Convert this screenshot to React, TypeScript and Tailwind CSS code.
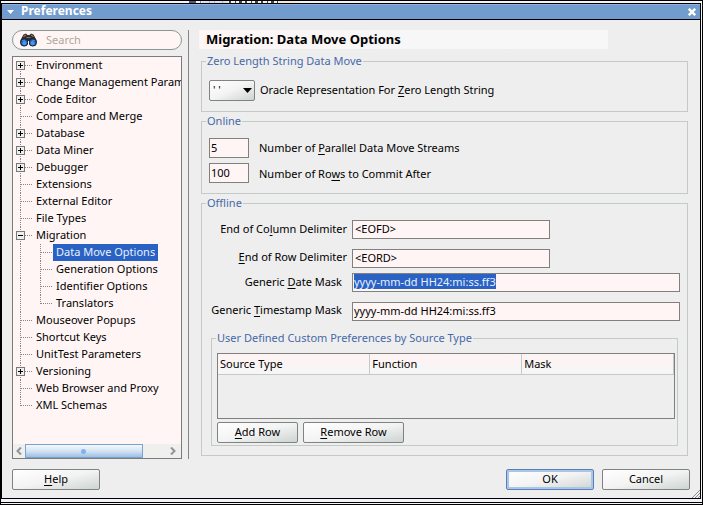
import { useEffect, useRef, useState } from "react";

type Node = { label: string; children?: string[]; expandable?: boolean };

const TREE: Node[] = [
  { label: "Environment", expandable: true },
  { label: "Change Management Param", expandable: true },
  { label: "Code Editor", expandable: true },
  { label: "Compare and Merge" },
  { label: "Database", expandable: true },
  { label: "Data Miner", expandable: true },
  { label: "Debugger", expandable: true },
  { label: "Extensions" },
  { label: "External Editor" },
  { label: "File Types" },
  {
    label: "Migration",
    expandable: true,
    children: ["Data Move Options", "Generation Options", "Identifier Options", "Translators"],
  },
  { label: "Mouseover Popups" },
  { label: "Shortcut Keys" },
  { label: "UnitTest Parameters" },
  { label: "Versioning", expandable: true },
  { label: "Web Browser and Proxy" },
  { label: "XML Schemas" },
];

/* One 20x17 cell of the tree's dotted guide lines */
function Guide({ first, last, branch = true, box }: any) {
  return (
    <svg width="20" height="17" viewBox="0 0 20 17" className="shrink-0" shapeRendering="crispEdges">
      <g stroke="#8a8686" strokeDasharray="1 1">
        <path d={`M7.5 ${first ? 8 : 0}V${last ? 9 : 17}`} />
        {branch && <path d="M8 8.5H20" />}
      </g>
      {box && (
        <>
          <rect x="3.5" y="4.5" width="8" height="8" fill="#f0eeec" stroke="#77787a" />
          <path d="M5 8.5H10" stroke="#000" />
          {box === "plus" && <path d="M7.5 6V11" stroke="#000" />}
        </>
      )}
    </svg>
  );
}

function Binoculars() {
  return (
    <svg width="17" height="14" viewBox="0 0 17 14" className="shrink-0">
      <path d="M3.5 1.5L6 0.5L7.5 2H9.5L11 0.5L13.5 1.5L16.5 7V10H0.5V7Z" fill="#332d2b" />
      <path d="M3.5 3.5L6 2M11 2L13.5 3.5" stroke="#a98f72" />
      <path d="M6.5 4.5H10.5" stroke="#6d7480" />
      <circle cx="4.2" cy="9.4" r="3.7" fill="#1f5cb0" stroke="#182339" />
      <circle cx="12.8" cy="9.4" r="3.7" fill="#1f5cb0" stroke="#182339" />
      <circle cx="4.4" cy="10.2" r="2.1" fill="#4298ec" />
      <circle cx="12.6" cy="10.2" r="2.1" fill="#4298ec" />
      <path d="M2 7.5H5M12 7.5H15" stroke="#5d7da8" />
      <path d="M8.5 8V14" stroke="#fff5f5" />
    </svg>
  );
}

function Sidebar() {
  const [selected, setSelected] = useState("Data Move Options");

  const item = (label: string) => (
    <button
      onClick={() => setSelected(label)}
      className={`h-[17px] px-[3px] pb-[2px] whitespace-nowrap ${
        selected === label ? "bg-[#2a62c4] text-[#e6f0ff]" : ""
      }`}
    >
      {label}
    </button>
  );

  return (
    <aside className="flex w-[170px] shrink-0 flex-col gap-[6px]">
      <label className="flex h-5 items-center gap-[9px] rounded-full border border-[#8b9694] bg-[#fff5f5] pl-[7px]">
        <Binoculars />
        <input
          type="search"
          aria-label="Search"
          placeholder="Search"
          className="w-full min-w-0 bg-transparent outline-none placeholder:text-[#b0a698]"
        />
      </label>

      <div className="flex flex-1 flex-col border border-[#7b7b7b] bg-[#fff5f5]">
        <ul className="flex-1 overflow-hidden">
          {TREE.map((node, i) => (
            <li key={node.label}>
              <div className="flex">
                <Guide
                  first={i === 0}
                  last={i === TREE.length - 1}
                  box={node.children ? "minus" : node.expandable && "plus"}
                />
                {item(node.label)}
              </div>
              {node.children && (
                <ul>
                  {node.children.map((child, j) => (
                    <li key={child} className="flex">
                      <Guide branch={false} />
                      <Guide last={j === node.children!.length - 1} />
                      {item(child)}
                    </li>
                  ))}
                </ul>
              )}
            </li>
          ))}
        </ul>

        {/* Horizontal scrollbar */}
        <div className="flex h-[14px] bg-[#efefee]">
          <button aria-label="Scroll left" className="flex w-3 items-center justify-center">
            <svg width="6" height="8" viewBox="0 0 6 8" fill="none" stroke="#8f9499" strokeWidth="2">
              <path d="M5 0.5L1.5 4L5 7.5" />
            </svg>
          </button>
          <div className="flex-1">
            <div className="flex h-full w-[84%] items-center justify-center border border-[#79a3cf] bg-linear-to-b from-[#f4f8fc] via-[#d5e4f3] to-[#9dbfe2]">
              <span className="size-[5px] rounded-full bg-[#7fb2ee]" />
            </div>
          </div>
          <button aria-label="Scroll right" className="flex w-4 items-center justify-center">
            <svg width="6" height="8" viewBox="0 0 6 8" fill="none" stroke="#8f9499" strokeWidth="2">
              <path d="M1 0.5L4.5 4L1 7.5" />
            </svg>
          </button>
        </div>
      </div>
    </aside>
  );
}

function Group({ title, className = "", children }: any) {
  return (
    <fieldset className={`min-w-0 border border-[#c3cac8] pl-1 ${className}`}>
      <legend className="h-[14px] px-px leading-[14px] text-[#4669a8]">{title}</legend>
      {children}
    </fieldset>
  );
}

function Button({ className = "", children, primary }: any) {
  return (
    <button
      className={`h-[21px] rounded-[2px] border bg-linear-to-br from-white via-[#f3f3f3] to-[#cdd4d2] pb-[2px] ${
        primary ? "border-[#5b7fb5] inset-ring-2 inset-ring-[#a9c5e8]" : "border-[#7f8382]"
      } ${className}`}
    >
      {children}
    </button>
  );
}

const field =
  "border border-[#808080] bg-[#fff5f5] pb-[2px] outline-none selection:bg-[#2a62c4] selection:text-[#e6f0ff]";

export default function App() {
  const dateMask = useRef<HTMLInputElement>(null);

  useEffect(() => {
    dateMask.current?.focus();
    dateMask.current?.select();
  }, []);

  return (
    <div className="flex min-h-screen flex-col border border-black bg-[#f3f3fa] font-['Noto_Sans',sans-serif] text-[11px] leading-[14px] text-black [&_u]:underline-offset-2">
      {/* Sliver of the window behind */}
      <div className="h-[2px] pl-[185px]">
        <svg width="120" height="2" viewBox="0 0 120 2" className="block" shapeRendering="crispEdges">
          <path d="M3 1H10" stroke="#55557a" strokeWidth="2" />
          <path d="M14 1H15M23 1H24M28 1H29M36 1H37" stroke="#8c8cb8" strokeWidth="2" />
          <path d="M16 1H42" stroke="#d3d3ee" strokeWidth="2" opacity="0.6" />
          <path d="M43 1H92" stroke="#444" strokeWidth="2" strokeDasharray="2 4 1 3 3 3" />
          <path d="M93 1H114" stroke="#f6e6dc" strokeWidth="2" />
        </svg>
      </div>

      <div className="relative mr-px flex flex-1 flex-col border border-black bg-[#eee]">
        <header className="flex h-4 items-center gap-[7px] border-b border-black bg-[#729bce] pr-1 pl-[5px] text-white inset-shadow-[0_1px_#8fb3de]">
          <svg width="7" height="4" viewBox="0 0 7 4">
            <path d="M0 0H7L3.5 4Z" fill="#fff" />
          </svg>
          <h1 className="flex-1 pb-px text-[12px] font-bold">Preferences</h1>
          <button aria-label="Close">
            <svg width="8" height="8" viewBox="0 0 8 8" stroke="#fff" strokeWidth="2.4">
              <path d="M0.8 0.8L7.2 7.2M7.2 0.8L0.8 7.2" />
            </svg>
          </button>
        </header>

        <div className="flex flex-1 flex-col gap-[10px] px-[10px] pt-[10px] pb-2">
          <div className="flex flex-1">
            <Sidebar />

            <main className="ml-[6px] min-w-0 flex-1 border-l border-[#858585] pr-[2px] pb-[3px] pl-[10px]">
              <h2 className="mr-20 h-[19px] bg-linear-to-r from-[#fff5f5] to-[#f7f7f7] to-50% pl-[7px] text-[13px] leading-[19px] font-bold">
                Migration: Data Move Options
              </h2>

              <div className="mt-[5px] ml-[2px] flex flex-col gap-[2px]">
                <Group title="Zero Length String Data Move" className="pt-3 pb-[10px]">
                  <div className="ml-[3px] flex items-center gap-[5px]">
                    <div className="relative">
                      <select
                        id="zero"
                        className="block h-[21px] w-[46px] appearance-none rounded-[2px] border border-[#7f8382] bg-linear-to-br from-white via-[#f3f3f3] to-[#cdd4d2] pb-[2px] pl-[3px]"
                      >
                        <option>' '</option>
                        <option>NULL</option>
                      </select>
                      <svg width="9" height="5" viewBox="0 0 9 5" className="pointer-events-none absolute top-2 right-[3px]">
                        <path d="M0 0H9L4.5 5Z" />
                      </svg>
                    </div>
                    <label htmlFor="zero" className="pb-[2px]">
                      Oracle Representation For <u>Z</u>ero Length String
                    </label>
                  </div>
                </Group>

                <Group title="Online" className="py-[10px]">
                  <div className="ml-[3px] grid grid-cols-[40px_1fr] items-center gap-x-[10px] gap-y-[5px]">
                    <input id="streams" defaultValue="5" className={`h-5 px-px ${field}`} />
                    <label htmlFor="streams">
                      Number of <u>P</u>arallel Data Move Streams
                    </label>
                    <input id="rows" defaultValue="100" className={`h-5 px-px ${field}`} />
                    <label htmlFor="rows" className="pt-[2px]">
                      Number of Ro<u>w</u>s to Commit After
                    </label>
                  </div>
                </Group>

                <Group title="Offline" className="pt-[10px] pr-[7px] pb-[9px]">
                  <div className="ml-[3px] grid grid-cols-[138px_1fr] items-center gap-x-[5px] gap-y-[10px] text-right">
                    <label htmlFor="col" className="pb-[2px]">
                      End of Co<u>l</u>umn Delimiter
                    </label>
                    <input id="col" defaultValue="<EOFD>" className={`h-[19px] w-[198px] px-[2px] ${field}`} />
                    <label htmlFor="row" className="pb-[4px]">
                      <u>E</u>nd of Row Delimiter
                    </label>
                    <input id="row" defaultValue="<EORD>" className={`h-[19px] w-[198px] px-[2px] ${field}`} />
                  </div>
                  <div className="mt-[5px] ml-[3px] grid grid-cols-[138px_1fr] items-center gap-x-[5px] gap-y-[10px] text-right whitespace-nowrap">
                    <label htmlFor="date" className="pr-[5px] pb-[2px]">
                      Generic <u>D</u>ate Mask
                    </label>
                    <input
                      id="date"
                      ref={dateMask}
                      defaultValue="yyyy-mm-dd HH24:mi:ss.ff3"
                      className={`h-[19px] px-px ${field}`}
                    />
                    <label htmlFor="stamp" className="pr-[5px] pb-[4px]">
                      Generic <u>T</u>imestamp Mask
                    </label>
                    <input id="stamp" defaultValue="yyyy-mm-dd HH24:mi:ss.ff3" className={`h-[19px] px-px ${field}`} />
                  </div>

                  <div className="mt-[10px] mr-[2px] ml-[5px]">
                    <Group title="User Defined Custom Preferences by Source Type" className="pt-2 pr-[2px] pb-[2px]">
                      <div className="ml-px h-[66px] border border-[#808080]">
                        <table className="w-full table-fixed border-collapse text-left">
                          <thead>
                            <tr className="h-5 bg-linear-to-b from-[#fff3f3] to-[#f6f6f6]">
                              {["Source Type", "Function", "Mask"].map((name) => (
                                <th key={name} className="border-r border-b border-[#c3cac8] px-[2px] py-0 font-normal">
                                  {name}
                                </th>
                              ))}
                            </tr>
                          </thead>
                          <tbody />
                        </table>
                      </div>
                      <div className="mt-[3px] ml-px flex gap-[5px]">
                        <Button className="w-[81px]">
                          <u>A</u>dd Row
                        </Button>
                        <Button className="w-[101px]">
                          <u>R</u>emove Row
                        </Button>
                      </div>
                    </Group>
                  </div>
                </Group>
              </div>
            </main>
          </div>

          <footer className="flex gap-2">
            <Button className="mr-auto w-[88px]">
              <u>H</u>elp
            </Button>
            <Button primary className="w-[88px]">
              OK
            </Button>
            <Button className="w-[88px]">Cancel</Button>
          </footer>
        </div>

        {/* Resize grip */}
        <svg width="8" height="8" viewBox="0 0 8 8" className="absolute right-0 bottom-0" stroke="#938d86">
          <path d="M0 8L8 0M3 8L8 3M6 8L8 6" />
        </svg>
      </div>

      <div className="mt-[3px] mb-px h-px bg-black" />
    </div>
  );
}
